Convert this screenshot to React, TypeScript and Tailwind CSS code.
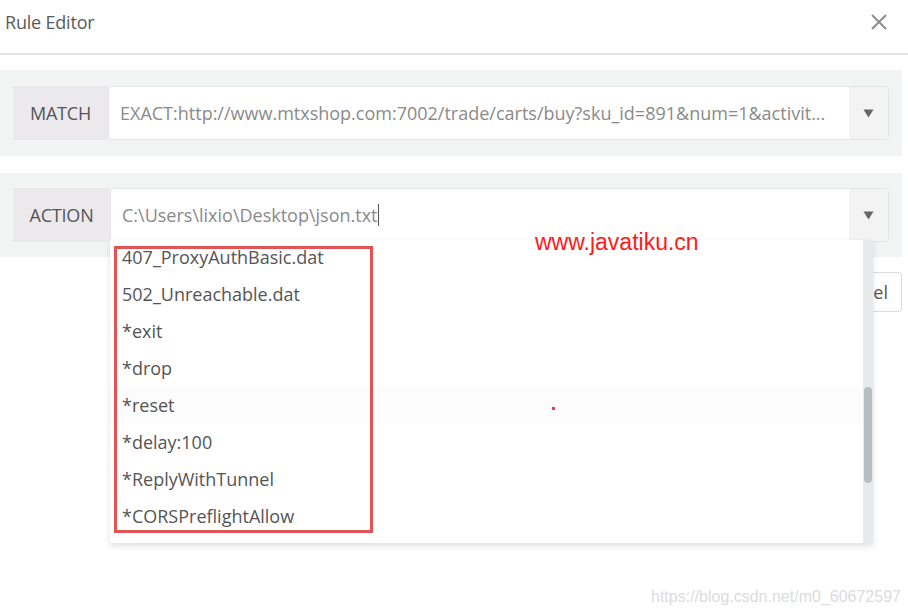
import React from "react";

const items = [
  "407_ProxyAuthBasic.dat",
  "502_Unreachable.dat",
  "*exit",
  "*drop",
  "*reset",
  "*delay:100",
  "*ReplyWithTunnel",
  "*CORSPreflightAllow",
];

function Caret() {
  return (
    <div className="w-[39px] self-stretch bg-[#f3f3f3] rounded-r-[4px] flex items-center justify-center">
      <svg width="11" height="9" viewBox="0 0 11 9">
        <path d="M0.5 0.5 L10.5 0.5 L5.5 8.5 Z" fill="#666" />
      </svg>
    </div>
  );
}

export default function App() {
  return (
    <div
      className="relative w-[908px] h-[616px] bg-white overflow-hidden text-[#555]"
      style={{ fontFamily: '"Open Sans", "Noto Sans", sans-serif' }}
    >
      {/* Header */}
      <div className="h-[55px] flex items-start justify-between pl-[5px] pr-[21px] pt-[9px] border-b-2 border-[#dfe3e3]">
        <span className="text-[18px] leading-[26px] text-[#5a5a5a] tracking-[-0.2px]">Rule Editor</span>
        <svg className="mt-[5px]" width="16" height="16" viewBox="0 0 16 16">
          <path d="M1 1 L15 15 M15 1 L1 15" stroke="#8a8a8a" strokeWidth="1.8" />
        </svg>
      </div>

      {/* Match panel */}
      <div className="mt-[15px] w-[902px] bg-[#f2f3f3] px-[13px] py-[16px]">
        <div className="flex h-[54px]">
          <div className="w-[95px] bg-[#ebe9ec] flex items-center justify-center text-[18px] text-[#555] tracking-[-0.2px]">
            MATCH
          </div>
          <div className="flex-1 flex bg-white border border-[#e4e6e6] rounded-[4px]">
            <div className="flex-1 flex items-center pl-[11px] text-[18px] text-[#8a8a8a] whitespace-nowrap overflow-hidden">
              EXACT:http://www.mtxshop.com:7002/trade/carts/buy?sku_id=891&amp;num=1&amp;activit...
            </div>
            <Caret />
          </div>
        </div>
      </div>

      {/* Action panel */}
      <div className="mt-[17px] w-[902px] bg-[#f2f3f3] px-[13px] py-[15px]">
        <div className="flex h-[54px]">
          <div className="w-[97px] bg-[#ebe9ec] flex items-center justify-center text-[18px] text-[#555] tracking-[-0.2px]">
            ACTION
          </div>
          <div className="flex-1 flex bg-white border border-[#e4e6e6] rounded-[4px]">
            <div className="flex-1 flex items-center pl-[11px] text-[18px] text-[#8a8a8a] whitespace-nowrap">
              C:\Users\lixio\Desktop\json.txt
              <span className="inline-block w-[1px] h-[22px] bg-[#555]" />
            </div>
            <Caret />
          </div>
        </div>
      </div>

      {/* Buttons row (behind dropdown) */}
      <div className="mt-[15px] flex justify-end pr-[6px]">
        <div className="h-[40px] pl-[12px] pr-[13px] flex items-center border border-[#dcdcdc] rounded-[3px] bg-white text-[18px] text-[#555]">
          Cancel
        </div>
      </div>

      {/* Dropdown */}
      <div className="absolute left-[110px] top-[240px] w-[763px] h-[303px] bg-white shadow-[0_3px_6px_rgba(0,0,0,0.12)] flex overflow-hidden">
        <div className="flex-1 flex flex-col -mt-[1.5px]">
          {items.map((t, i) => (
            <div
              key={t}
              className={
                "h-[37.1px] shrink-0 flex items-center pl-[12px] text-[18px] text-[#555] " +
                (i === 4 ? "bg-[#fcfcfc]" : "")
              }
            >
              {t}
            </div>
          ))}
        </div>
        <div className="w-[10px] bg-[#e7eaeb] relative">
          <div className="absolute left-[1px] right-[1px] top-[147px] h-[96px] rounded-[4px] bg-[#b7bec1]" />
        </div>
      </div>

      {/* Red highlight box */}
      <div className="absolute left-[114px] top-[246px] w-[259px] h-[287px] border-[3px] border-[#e25353]" />

      {/* Red dot */}
      <div className="absolute left-[552px] top-[407px] w-[3px] h-[3px] bg-[#e04040]" />

      {/* Watermarks */}
      <div
        className="absolute left-[535px] top-[231px] text-[23px] leading-none text-[#ff1a1a]"
        style={{ fontFamily: '"Liberation Sans", Arial, sans-serif' }}
      >
        www.javatiku.cn
      </div>
      <div
        className="absolute left-[651px] top-[589px] text-[16px] leading-none text-[#dcdcdc]"
        style={{ fontFamily: '"Liberation Sans", Arial, sans-serif' }}
      >
        https://blog.csdn.net/m0_60672597
      </div>
    </div>
  );
}
